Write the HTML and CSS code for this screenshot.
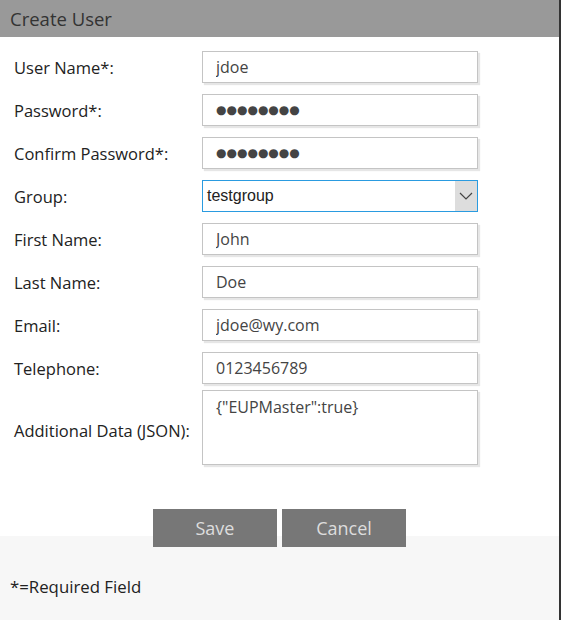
FILE: index.html
```html
<!doctype html>
<html lang="en">
<head>
    <meta charset="UTF-8">
    <title>Create User</title>
    <link rel="stylesheet" href="styles.css">
</head>
<body>
<div class="dialog">
    <div class="dialog-title">Create User</div>
    <form class="user-form">
        <div class="fields">
            <label for="username">User Name*:</label>
            <input id="username" class="field" type="text" value="jdoe">

            <label for="password">Password*:</label>
            <input id="password" class="field dots" type="text" value="●●●●●●●●">

            <label for="confirm">Confirm Password*:</label>
            <input id="confirm" class="field dots" type="text" value="●●●●●●●●">

            <label for="group">Group:</label>
            <div class="select-box">
                <span class="select-value">testgroup</span>
                <span class="select-arrow">
                    <svg width="14" height="8" viewBox="0 0 14 8"><path d="M1 1 L7 7 L13 1" fill="none" stroke="#444" stroke-width="1.2"/></svg>
                </span>
            </div>

            <label for="firstname">First Name:</label>
            <input id="firstname" class="field" type="text" value="John">

            <label for="lastname">Last Name:</label>
            <input id="lastname" class="field" type="text" value="Doe">

            <label for="email">Email:</label>
            <input id="email" class="field" type="text" value="jdoe@wy.com">

            <label for="phone">Telephone:</label>
            <input id="phone" class="field" type="text" value="0123456789">

            <label for="extra">Additional Data (JSON):</label>
            <textarea id="extra" class="field area">{"EUPMaster":true}</textarea>
        </div>
        <div class="buttons">
            <button type="button" class="btn">Save</button>
            <button type="button" class="btn">Cancel</button>
        </div>
    </form>
    <div class="dialog-foot">*=Required Field</div>
</div>
</body>
</html>
```

FILE: styles.css
```css
*{
    padding: 0;
    margin: 0;
    box-sizing: border-box;
}
body{
    background: #fff;
    font-family: "Open Sans", "Noto Sans", sans-serif;
    color: #222;
}
.dialog{
    width: 561px;
    height: 620px;
    border-right: 2px solid #333;
    display: flex;
    flex-direction: column;
}
.dialog-title{
    height: 37px;
    line-height: 37px;
    padding-left: 10px;
    background: #999;
    color: #333;
    font-size: 18.5px;
}
.user-form{
    padding-top: 14px;
}
.fields{
    display: grid;
    grid-template-columns: 188px 276px;
    row-gap: 11px;
    padding-left: 14px;
    align-items: center;
}
.fields label{
    font-size: 16.5px;
    color: #222;
}
.field{
    height: 32px;
    border: 1px solid #c4c4c4;
    box-shadow: 2px 2px 1px #e6e6e6;
    padding: 0 13px;
    font-family: "Open Sans", "Noto Sans", sans-serif;
    font-size: 16px;
    color: #444;
    background: #fff;
    outline: none;
}
.field.dots{
    font-family: "DejaVu Sans", sans-serif;
    font-size: 12px;
    color: #444;
}
.field.area{
    height: 75px;
    padding-top: 5px;
    resize: none;
    margin-top: -5px;
}
.select-box{
    height: 32px;
    border: 1px solid #2a9be0;
    display: flex;
    align-items: stretch;
}
.select-value{
    flex: 1;
    line-height: 30px;
    padding-left: 4px;
    font-family: "Liberation Sans", Arial, sans-serif;
    font-size: 16px;
    color: #222;
}
.select-arrow{
    width: 22px;
    background: #ddd;
    display: flex;
    align-items: center;
    justify-content: center;
}
.buttons{
    display: flex;
    justify-content: center;
    gap: 5px;
    margin-top: 44px;
    margin-bottom: -11px;
    position: relative;
}
.btn{
    width: 124px;
    height: 38px;
    border: none;
    background: #777;
    color: #ddd;
    font-family: "Open Sans", "Noto Sans", sans-serif;
    font-size: 18px;
}
.dialog-foot{
    flex: 1;
    background: #f7f7f7;
    padding: 39px 0 0 10px;
    line-height: 23px;
    font-size: 16.8px;
    color: #222;
}
```
